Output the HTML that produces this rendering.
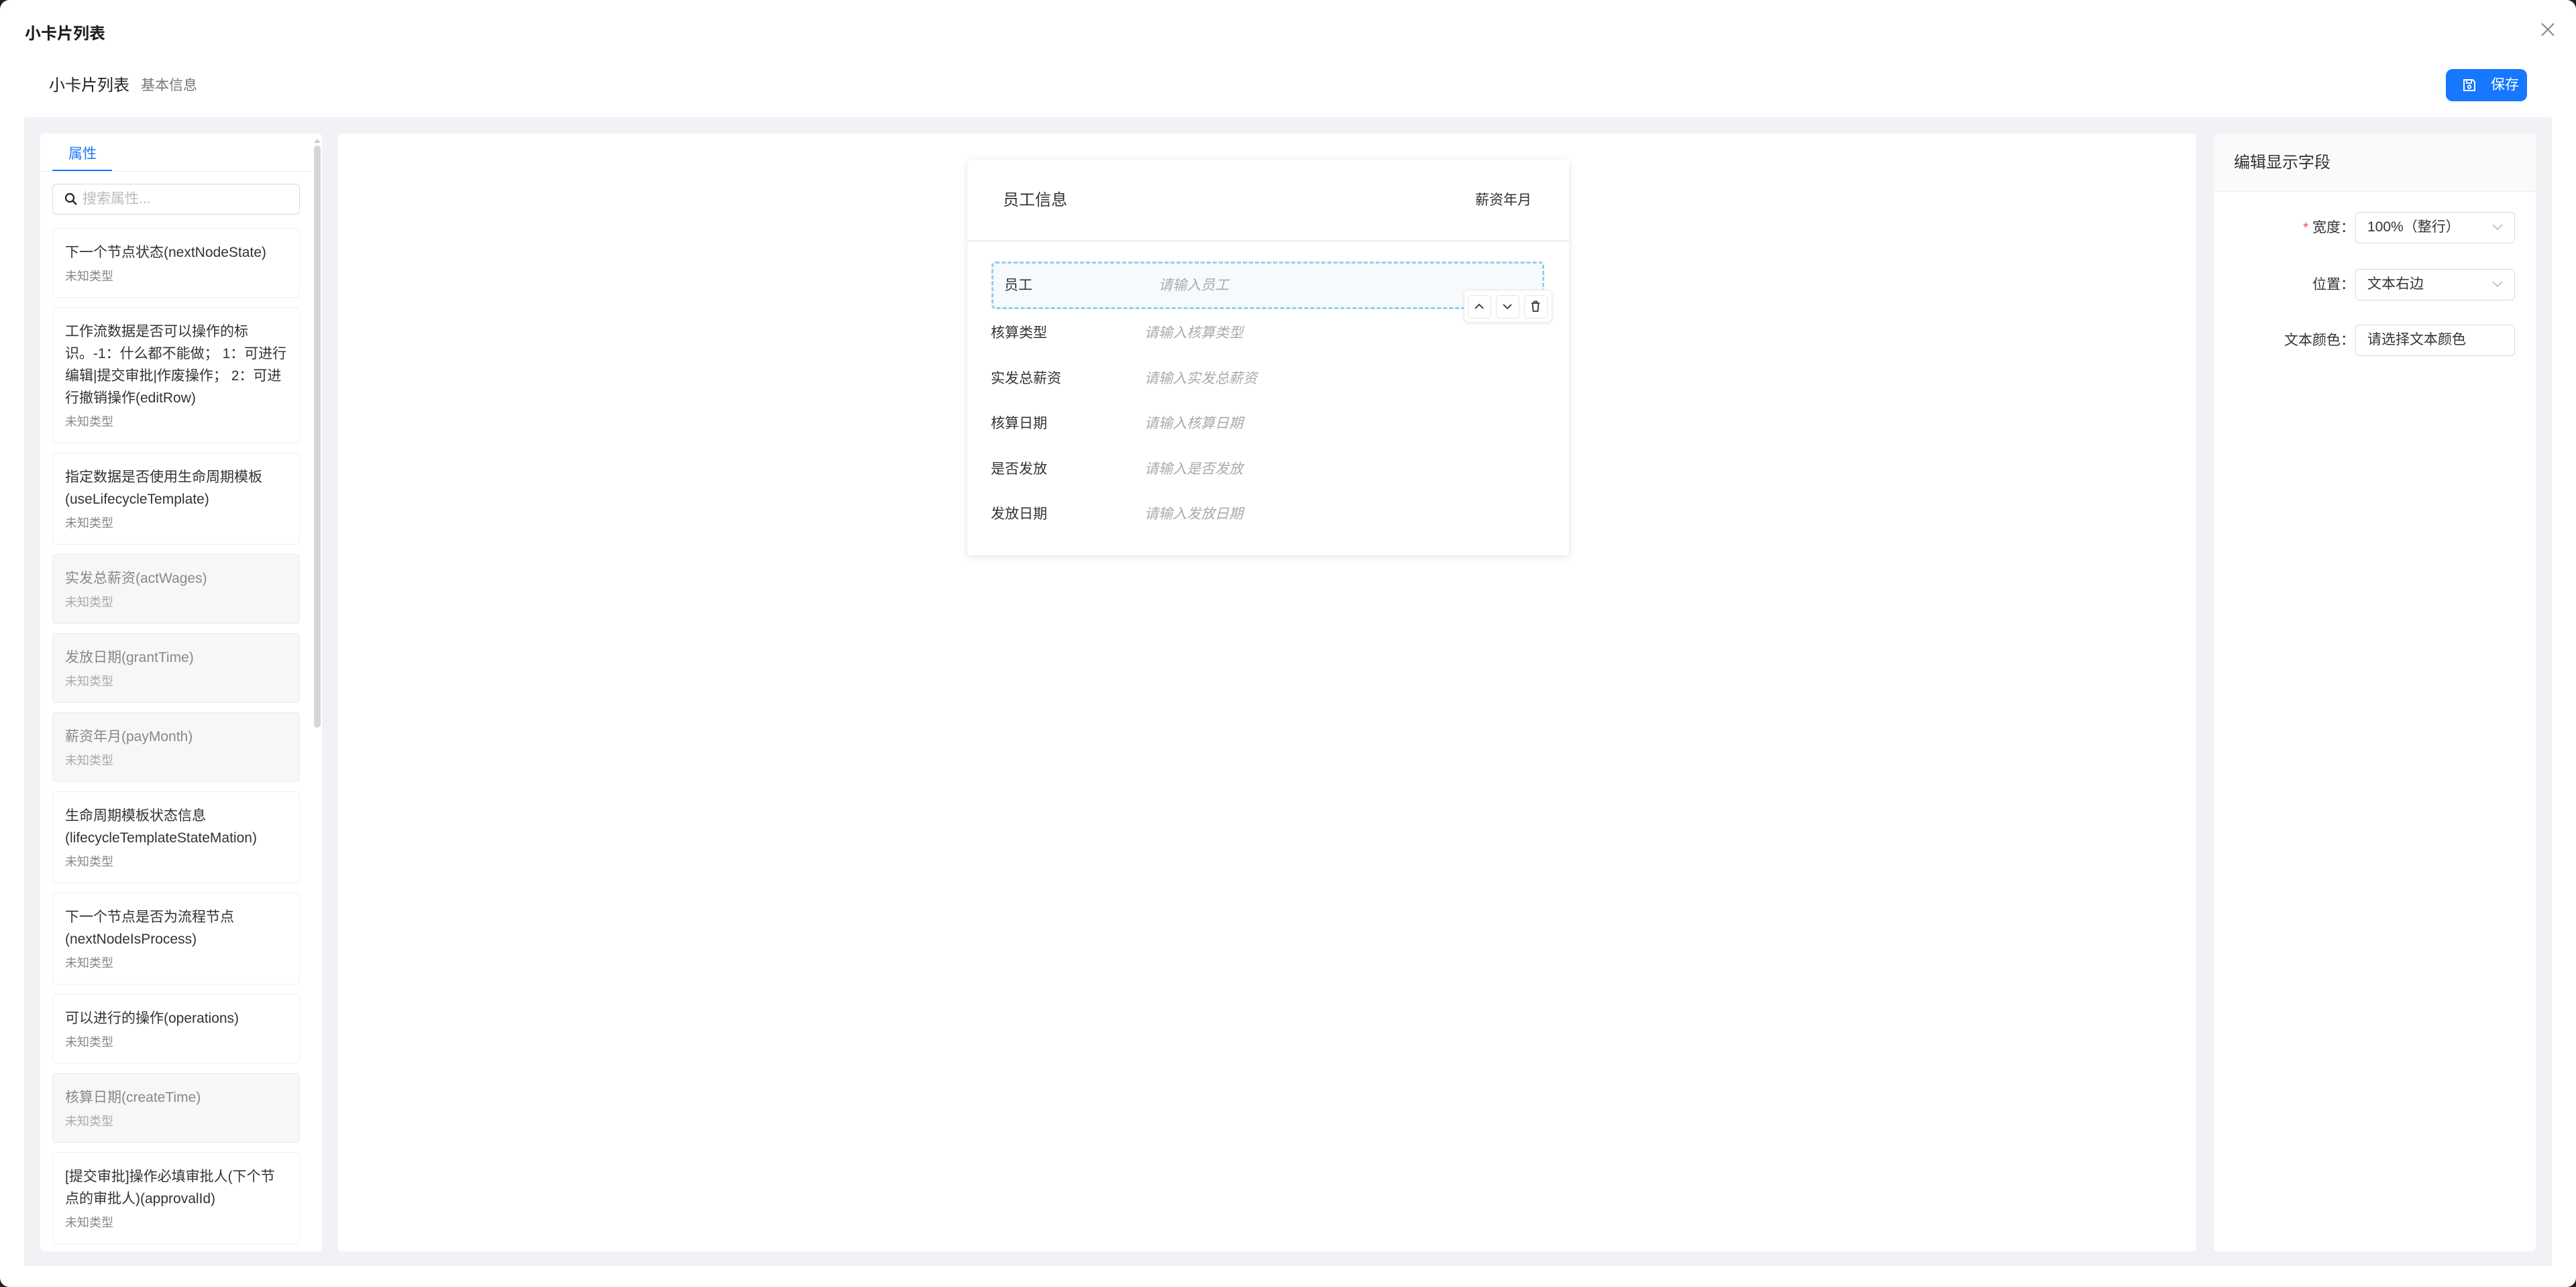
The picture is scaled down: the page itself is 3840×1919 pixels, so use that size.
<!DOCTYPE html>
<html><head><meta charset="utf-8"><style>
*{box-sizing:border-box;margin:0;padding:0}
body{width:3840px;height:1919px;background:#222;font-family:"Liberation Sans","Noto Sans CJK SC",sans-serif;color:#333;overflow:hidden;position:relative}
.modal{position:absolute;left:0;top:0;width:3840px;height:1919px;background:#fff;border-radius:14px;overflow:hidden}
.a{position:absolute}
.gray{position:absolute;left:36px;top:175px;width:3768px;height:1713px;background:#f0f2f5}
.panel{position:absolute;background:#fff;border-radius:6px}
.card{width:369px;margin-bottom:14px;border:1.5px solid #f0f0f0;border-radius:6px;padding:19px 18px 18px 18px;background:#fff}
.card .t{font-size:21px;line-height:33px;color:#333}
.card .s{font-size:18px;line-height:26px;color:#888;margin-top:6px}
.card.d{background:#f7f7f7;border-color:#ececec}
.card.d .t{color:#888}
.card.d .s{color:#aaa}
.row{position:absolute;font-size:21px;line-height:30px}
.ph{color:#aaa;font-style:italic}
.sel{position:absolute;left:3511px;width:238px;height:47px;border:1.5px solid #d9d9d9;border-radius:6px;font-size:21px;line-height:44px;padding-left:17px;color:#333}
.lbl{position:absolute;right:330px;font-size:21px;line-height:47px;color:#333;text-align:right}
.btn{position:absolute;top:7px;width:35px;height:35px;border:1.5px solid #e5e5e5;border-radius:6px;background:#fff}
</style></head><body>
<div class="modal">
<div class="a" style="left:37px;top:34px;font-size:24px;font-weight:bold;color:#1f1f1f;line-height:34px">小卡片列表</div>
<svg class="a" style="left:3787px;top:33px" width="22" height="22" viewBox="0 0 22 22"><path d="M2 2L20 20M20 2L2 20" stroke="#888" stroke-width="2"/></svg>
<div class="a" style="left:73px;top:111px;font-size:24px;color:#222;line-height:34px">小卡片列表</div>
<div class="a" style="left:210px;top:112px;font-size:21px;color:#777;line-height:32px">基本信息</div>
<div class="a" style="left:3646px;top:103px;width:121px;height:48px;background:#1677ff;border-radius:10px;color:#fff;font-size:21px;line-height:48px;padding-left:67px">保存</div>
<svg class="a" style="left:3670px;top:116px" width="22" height="22" viewBox="0 0 22 22"><path d="M3 3H16L19 6V19H3Z" fill="none" stroke="#fff" stroke-width="2"/><path d="M7 3V8H14V3" fill="none" stroke="#fff" stroke-width="1.8"/><circle cx="11" cy="13.5" r="2.3" fill="none" stroke="#fff" stroke-width="1.8"/></svg>

<div class="gray"></div>
<div class="panel" style="left:60px;top:199px;width:420px;height:1667px;overflow:hidden">
  <div class="a" style="left:42px;top:14px;font-size:21px;color:#1677ff;line-height:34px">属性</div>
  <div class="a" style="left:18px;top:54px;width:89px;height:3px;background:#1677ff"></div>
  <div class="a" style="left:0;top:56px;width:405px;height:1px;background:#eee"></div>
  <div class="a" style="left:18px;top:75px;width:369px;height:46px;border:1.5px solid #d9d9d9;border-radius:6px"></div>
  <svg class="a" style="left:36px;top:88px" width="20" height="20" viewBox="0 0 20 20"><circle cx="8" cy="8" r="6" fill="none" stroke="#222" stroke-width="2.2"/><path d="M12.5 12.5L18 18" stroke="#222" stroke-width="2.4"/></svg>
  <div class="a" style="left:63px;top:82px;font-size:21px;color:#bbb;line-height:32px">搜索属性...</div>
  <div class="a" style="left:408px;top:8px;width:0;height:0;border-left:5px solid transparent;border-right:5px solid transparent;border-bottom:6px solid #ccc"></div>
  <div class="a" style="left:408px;top:18px;width:10px;height:868px;background:#d6d6d6;border-radius:5px"></div>
  <div class="a" style="left:18px;top:141px">
    <div class="card"><div class="t">下一个节点状态(nextNodeState)</div><div class="s">未知类型</div></div>
    <div class="card"><div class="t">工作流数据是否可以操作的标<br>识。-1：什么都不能做； 1：可进行<br>编辑|提交审批|作废操作； 2：可进<br>行撤销操作(editRow)</div><div class="s">未知类型</div></div>
    <div class="card"><div class="t">指定数据是否使用生命周期模板<br>(useLifecycleTemplate)</div><div class="s">未知类型</div></div>
    <div class="card d"><div class="t">实发总薪资(actWages)</div><div class="s">未知类型</div></div>
    <div class="card d"><div class="t">发放日期(grantTime)</div><div class="s">未知类型</div></div>
    <div class="card d"><div class="t">薪资年月(payMonth)</div><div class="s">未知类型</div></div>
    <div class="card"><div class="t">生命周期模板状态信息<br>(lifecycleTemplateStateMation)</div><div class="s">未知类型</div></div>
    <div class="card"><div class="t">下一个节点是否为流程节点<br>(nextNodeIsProcess)</div><div class="s">未知类型</div></div>
    <div class="card"><div class="t">可以进行的操作(operations)</div><div class="s">未知类型</div></div>
    <div class="card d"><div class="t">核算日期(createTime)</div><div class="s">未知类型</div></div>
    <div class="card"><div class="t">[提交审批]操作必填审批人(下个节<br>点的审批人)(approvalId)</div><div class="s">未知类型</div></div>
    <div class="card"><div class="t">主键(id)</div><div class="s">未知类型</div></div>
  </div>
</div>
<div class="panel" style="left:504px;top:199px;width:2770px;height:1667px"></div>
<div class="a" style="left:1442px;top:238px;width:897px;height:590px;background:#fff;border-radius:4px;box-shadow:0 2px 10px rgba(0,0,0,0.12)">
  <div class="a" style="left:53px;top:44px;font-size:24px;line-height:34px;color:#333">员工信息</div>
  <div class="a" style="right:56px;top:45px;font-size:21px;line-height:32px;color:#333">薪资年月</div>
  <div class="a" style="left:0;top:120px;width:897px;height:1.5px;background:#eee"></div>
</div>
<div class="a" style="left:1478px;top:390px;width:824px;height:71px;background:#f7fafc;border:3px dashed #8fd0ee;border-radius:6px"></div>
<div class="row" style="left:1497px;top:411px">员工</div><div class="row ph" style="left:1727px;top:411px">请输入员工</div>
<div class="row" style="left:1477px;top:482px">核算类型</div><div class="row ph" style="left:1706px;top:482px">请输入核算类型</div>
<div class="row" style="left:1477px;top:550px">实发总薪资</div><div class="row ph" style="left:1706px;top:550px">请输入实发总薪资</div>
<div class="row" style="left:1477px;top:617px">核算日期</div><div class="row ph" style="left:1706px;top:617px">请输入核算日期</div>
<div class="row" style="left:1477px;top:685px">是否发放</div><div class="row ph" style="left:1706px;top:685px">请输入是否发放</div>
<div class="row" style="left:1477px;top:752px">发放日期</div><div class="row ph" style="left:1706px;top:752px">请输入发放日期</div>
<div class="a" style="left:2182px;top:432px;width:132px;height:49px;background:#fff;border:1.5px solid #e8e8e8;border-radius:7px;box-shadow:0 2px 6px rgba(0,0,0,0.08)">
  <div class="btn" style="left:5px"><svg width="32" height="32" viewBox="0 0 32 32"><path d="M10 19L16 13L22 19" fill="none" stroke="#333" stroke-width="1.8"/></svg></div>
  <div class="btn" style="left:47px"><svg width="32" height="32" viewBox="0 0 32 32"><path d="M10 13L16 19L22 13" fill="none" stroke="#333" stroke-width="1.8"/></svg></div>
  <div class="btn" style="left:89px"><svg width="32" height="32" viewBox="0 0 32 32"><path d="M10 11H22M14 11V8.5H18V11M11.5 11L12.5 23H19.5L20.5 11" fill="none" stroke="#333" stroke-width="1.8"/></svg></div>
</div>
<div class="panel" style="left:3300px;top:199px;width:480px;height:1667px;overflow:hidden">
  <div class="a" style="left:0;top:0;width:480px;height:87px;background:#fafafa;border-bottom:1.5px solid #eee"></div>
  <div class="a" style="left:30px;top:27px;font-size:24px;line-height:34px;color:#333">编辑显示字段</div>
</div>
<div class="lbl" style="top:316px"><span style="color:#ff4d4f">* </span>宽度：</div>
<div class="sel" style="top:316px">100%（整行）</div>
<div class="lbl" style="top:401px">位置：</div>
<div class="sel" style="top:401px">文本右边</div>
<div class="lbl" style="top:484px">文本颜色：</div>
<div class="sel" style="top:484px">请选择文本颜色</div>
<svg class="a" style="left:3715px;top:333px" width="16" height="12" viewBox="0 0 16 12"><path d="M1 2L8 9L15 2" fill="none" stroke="#bbb" stroke-width="1.6"/></svg>
<svg class="a" style="left:3715px;top:418px" width="16" height="12" viewBox="0 0 16 12"><path d="M1 2L8 9L15 2" fill="none" stroke="#bbb" stroke-width="1.6"/></svg>
</div>
</body></html>
